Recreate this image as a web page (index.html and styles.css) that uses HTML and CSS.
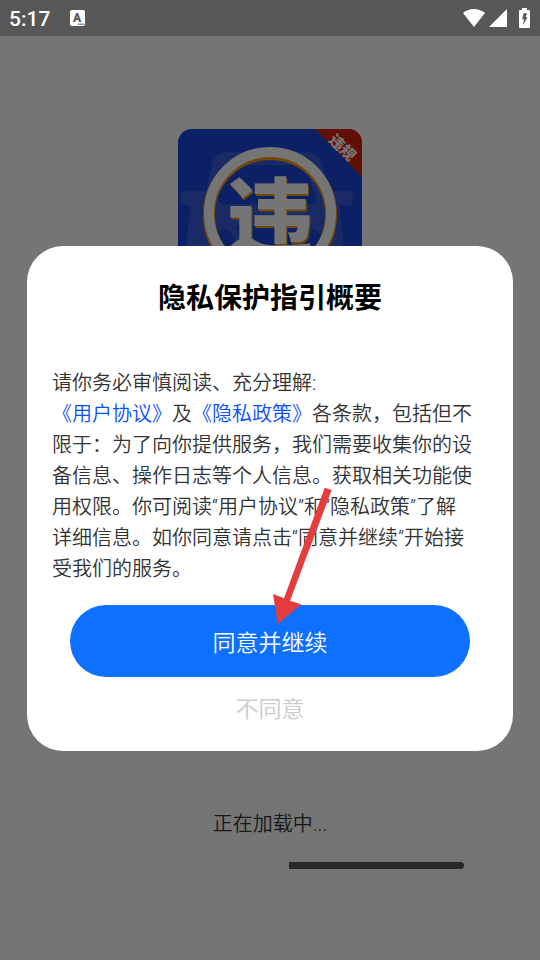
FILE: index.html
```html
<!DOCTYPE html>
<html lang="zh-CN">
<head>
<meta charset="utf-8">
<meta name="viewport" content="width=device-width, initial-scale=1">
<title>隐私保护指引概要</title>
<link rel="stylesheet" href="styles.css">
</head>
<body>
<header class="status">
  <span class="time">5:17</span>
  <svg class="notice" width="16" height="16" viewBox="0 0 16 16" aria-hidden="true">
    <rect width="15" height="16" rx="2" fill="#fff"/>
    <text x="7" y="12" text-anchor="middle" class="notice-letter">A</text>
    <path d="M8 13.5h1.4v1.4H8zM10.2 13.5h1.4v1.4h-1.4zM12.4 13.5h1.4v1.4h-1.4z" fill="#575757"/>
  </svg>
  <div class="signals">
    <svg width="22" height="18" viewBox="0 0 22 18" aria-hidden="true"><path d="M0 4Q5 0 11 0T22 4L11 18Z" fill="#fff"/></svg>
    <svg width="18" height="18" viewBox="0 0 18 18" aria-hidden="true"><path d="M18 0V18H0Z" fill="#fff"/></svg>
    <svg class="battery" width="11" height="20" viewBox="0 0 11 20" aria-hidden="true"><path d="M3 0h5v2h2q1 0 1 1v16q0 1-1 1H1q-1 0-1-1V3q0-1 1-1h2z" fill="#fff"/><path d="M4.6 5.2H8L6.6 9H8.4L4 17.6L5 11.2H3.2Z" fill="#575757"/></svg>
  </div>
</header>
<main class="splash">
  <svg class="logo" width="184" height="184" viewBox="0 0 184 184" role="img" aria-label="违规">
    <defs><clipPath id="tile"><rect width="184" height="184" rx="14"/></clipPath></defs>
    <g clip-path="url(#tile)">
      <rect width="184" height="184" fill="#1c48dc"/>
      <path d="M28 62L34 36Q37 23 50 23H128Q141 23 144 36L150 62H170Q175 62 175 67V71Q175 76 170 76H161L165 110V184H9V110L13 76H8Q3 76 3 71V67Q3 62 8 62Z" fill="#375ddc"/>
      <path d="M52 36H126L138 68Q139 75 132 75H46Q39 75 40 68Z" fill="#1c48dc"/>
      <path d="M58 97H120L114 116H64Z" fill="#1c48dc"/>
      <circle cx="45" cy="112" r="11" fill="#1c48dc"/>
      <circle cx="133" cy="112" r="11" fill="#1c48dc"/>
      <circle cx="92" cy="86" r="61" fill="none" stroke="#f79b0b" stroke-width="12"/>
      <circle cx="92" cy="84" r="61" fill="none" stroke="#fff" stroke-width="10"/>
      <text class="mark" x="92" y="120" text-anchor="middle">违</text>
      <path d="M137 0H184V48Z" fill="#d5210b"/>
      <text class="ribbon" transform="translate(166 17) rotate(45)" x="0" y="1" text-anchor="middle">违规</text>
    </g>
  </svg>
  <div class="loading">
    <p class="loading-text">正在加载中...</p>
    <div class="track" role="progressbar" aria-label="正在加载中"><div class="fill"></div></div>
  </div>
</main>
<div class="scrim">
  <section class="dialog" role="dialog" aria-modal="true" aria-labelledby="dialog-title">
    <h1 id="dialog-title">隐私保护指引概要</h1>
    <p class="terms">请你务必审慎阅读、充分理解:<br><a href="#terms">《用户协议》</a>及<a href="#privacy">《隐私政策》</a>各条款，包括但不限于：为了向你提供服务，我们需要收集你的设备信息、操作日志等个人信息。获取相关功能使用权限。你可阅读“用户协议”和“隐私政策”了解<br>详细信息。如你同意请点击“同意并继续”开始接<br>受我们的服务。</p>
    <div class="accept-row">
      <button class="accept" type="button">同意并继续</button>
      <svg class="arrow" width="60" height="138" viewBox="0 0 60 138" aria-hidden="true"><path d="M52.7 .7L59.7 3L18 113.7L29.3 117.3L5.7 137.3L1 107L12 111.3Z" fill="#e43d3d"/></svg>
    </div>
    <button class="decline" type="button">不同意</button>
  </section>
</div>
</body>
</html>
```
FILE: styles.css
```css
* {
  box-sizing: border-box;
}

body {
  margin: 0;
  min-height: 100vh;
  display: flex;
  flex-direction: column;
  background: #fff;
  font-family: Roboto, "Noto Sans CJK SC", sans-serif;
  font-weight: 350;
}

h1,
p {
  margin: 0;
}

.status {
  height: 36px;
  padding: 0 10px 0 9px;
  display: flex;
  align-items: center;
  background: #575757;
  color: #fff;
}

.time {
  font-size: 21px;
  line-height: 36px;
  font-weight: 500;
  padding-top: 2px;
}

.notice {
  margin-left: 20px;
}

.notice-letter {
  font: 900 12px Roboto, sans-serif;
  fill: #575757;
}

.signals {
  margin-left: auto;
  display: flex;
  align-items: center;
  gap: 4px;
}

.battery {
  margin-left: 8px;
}

.splash {
  flex: 1;
  display: flex;
  flex-direction: column;
  align-items: center;
  justify-content: space-between;
  padding: 93px 76px 91px;
}

.mark {
  font: 900 86px "Noto Sans CJK SC", sans-serif;
  fill: #fff;
  filter: drop-shadow(1px 2px 0 #f79b0b);
}

.ribbon {
  font: 900 15px "Noto Sans CJK SC", sans-serif;
  fill: #fff;
  dominant-baseline: central;
}

.loading {
  width: 100%;
}

.loading-text {
  font-size: 20px;
  line-height: 30px;
  text-align: center;
  color: #333;
}

.track {
  margin-top: 23px;
  height: 7px;
  display: flex;
  justify-content: flex-end;
}

.fill {
  width: 45%;
  border-radius: 0 4px 4px 0;
  background: #575757;
}

.scrim {
  position: fixed;
  inset: 36px 0 0;
  display: flex;
  align-items: center;
  padding: 0 27px;
  background: rgba(0, 0, 0, 0.54);
}

.dialog {
  width: 100%;
  padding: 33px 25px 21px;
  border-radius: 36px;
  background: #fff;
  display: flex;
  flex-direction: column;
}

h1 {
  font-size: 28px;
  line-height: 40px;
  font-weight: 700;
  text-align: center;
  color: #000;
}

.terms {
  margin-top: 49px;
  font-size: 20px;
  line-height: 31px;
  color: #333;
}

.terms a {
  color: #0a4dff;
  text-decoration: none;
}

.accept-row {
  position: relative;
  margin: 20px 18px 0;
}

.accept,
.decline {
  border: 0;
  font: inherit;
  font-size: 23px;
  cursor: pointer;
}

.accept {
  width: 100%;
  height: 72px;
  border-radius: 36px;
  background: #0d70ff;
  color: #fff;
}

.arrow {
  position: absolute;
  left: 50%;
  bottom: 52px;
  margin-left: 2px;
  pointer-events: none;
}

.decline {
  margin-top: 13px;
  padding: 0;
  align-self: center;
  line-height: 40px;
  background: none;
  color: #ccc;
}
```
